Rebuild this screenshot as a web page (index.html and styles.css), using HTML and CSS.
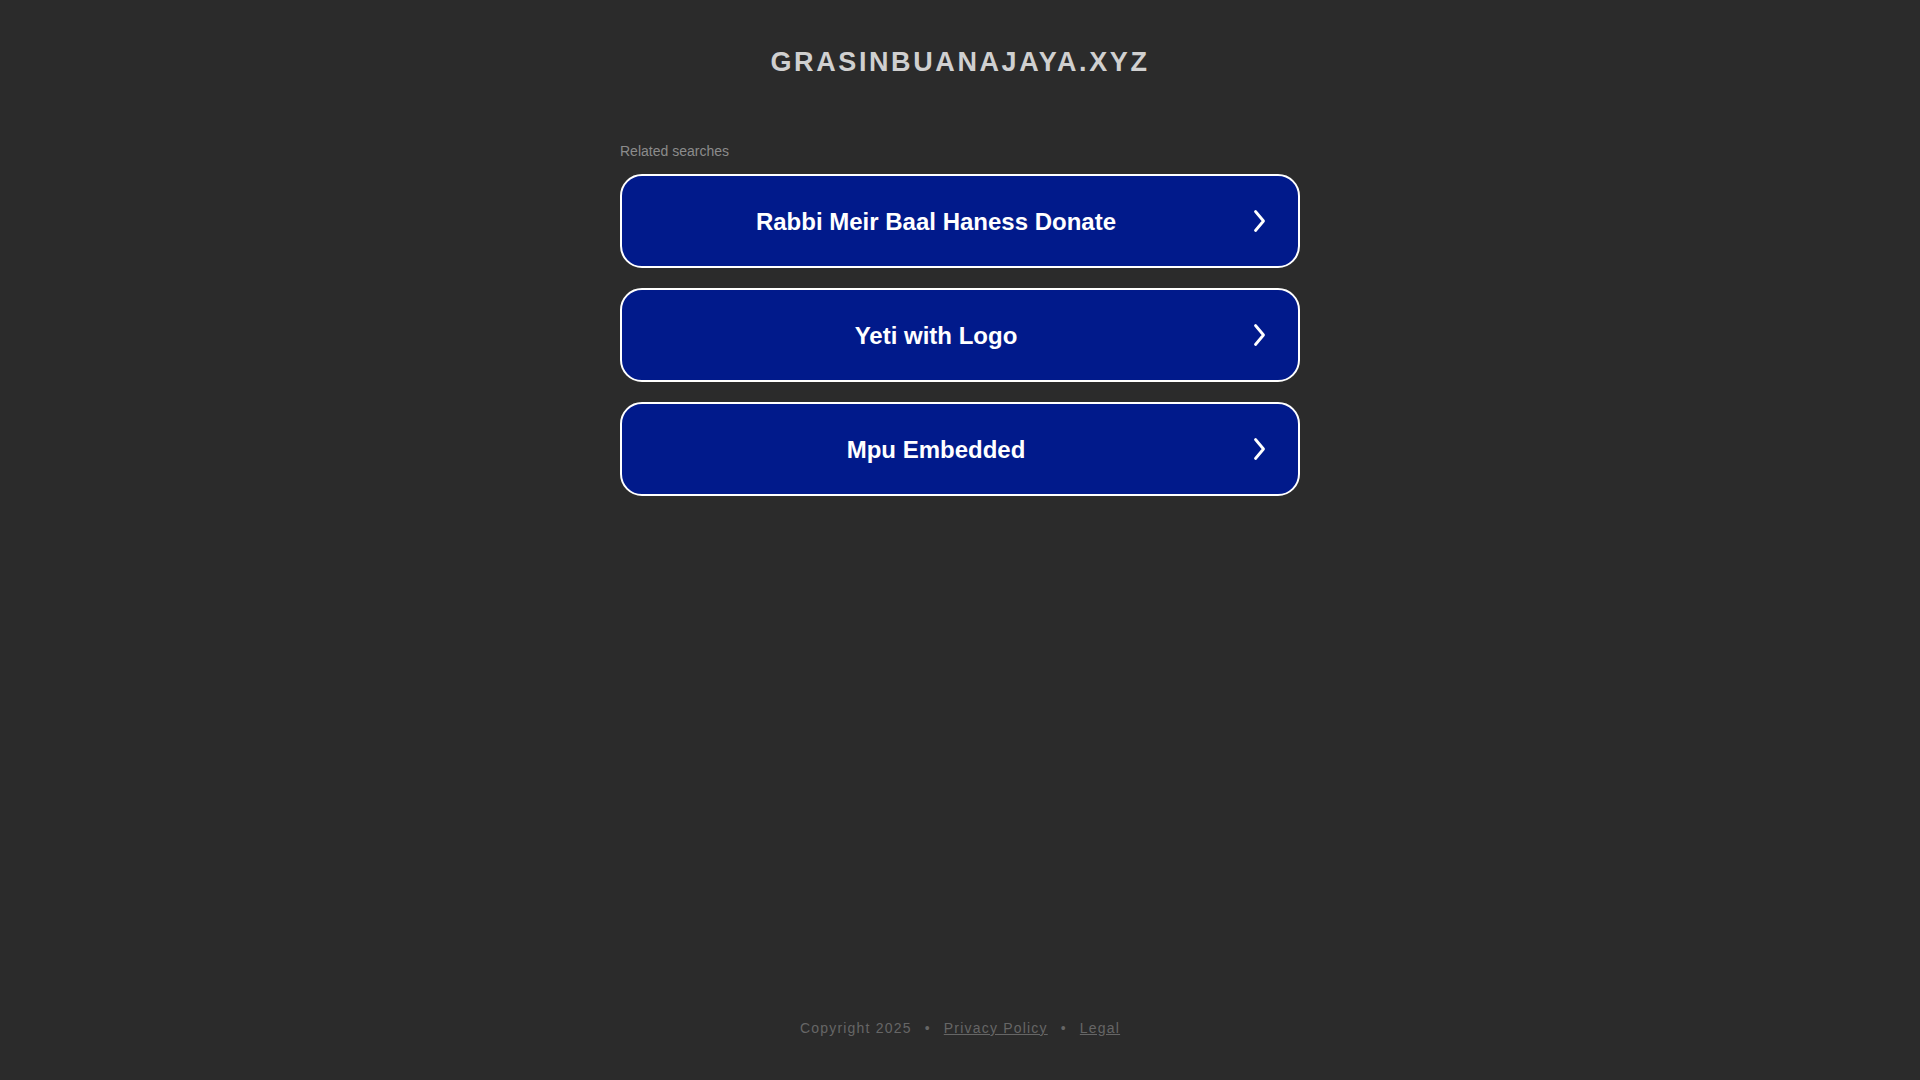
FILE: index.html
```html
<!DOCTYPE html>
<html lang="en">
<head>
<meta charset="utf-8">
<title>grasinbuanajaya.xyz</title>
<link rel="stylesheet" href="styles.css">
</head>
<body>
<div class="page">
  <header class="header">
    <h1 class="domain">grasinbuanajaya.xyz</h1>
  </header>
  <main class="content">
    <div class="related-title">Related searches</div>
    <ul class="links">
      <li><a class="link-btn" href="#"><span class="link-text">Rabbi Meir Baal Haness Donate</span><svg class="chev" width="14" height="24" viewBox="0 0 14 24"><path d="M3.5 2.5 L11.5 12 L3.5 21.5" fill="none" stroke="#fff" stroke-width="2.8" stroke-linecap="round" stroke-linejoin="round"/></svg></a></li>
      <li><a class="link-btn" href="#"><span class="link-text">Yeti with Logo</span><svg class="chev" width="14" height="24" viewBox="0 0 14 24"><path d="M3.5 2.5 L11.5 12 L3.5 21.5" fill="none" stroke="#fff" stroke-width="2.8" stroke-linecap="round" stroke-linejoin="round"/></svg></a></li>
      <li><a class="link-btn" href="#"><span class="link-text">Mpu Embedded</span><svg class="chev" width="14" height="24" viewBox="0 0 14 24"><path d="M3.5 2.5 L11.5 12 L3.5 21.5" fill="none" stroke="#fff" stroke-width="2.8" stroke-linecap="round" stroke-linejoin="round"/></svg></a></li>
    </ul>
  </main>
  <footer class="footer">
    <span>Copyright 2025</span><span class="dot">•</span><a href="#">Privacy Policy</a><span class="dot">•</span><a href="#">Legal</a>
  </footer>
</div>
</body>
</html>
```
FILE: styles.css
```css
html, body {
  margin: 0;
  padding: 0;
}
body {
  background: #2b2b2b;
  font-family: "Liberation Sans", Arial, sans-serif;
}
.page {
  min-height: 100vh;
  display: flex;
  flex-direction: column;
  align-items: center;
}
.header {
  padding-top: 47px;
}
.domain {
  margin: 0;
  font-size: 27px;
  line-height: 30px;
  font-weight: bold;
  letter-spacing: 2.6px;
  text-transform: uppercase;
  color: #d0d0d0;
  text-align: center;
}
.content {
  width: 680px;
  margin-top: 66px;
}
.related-title {
  font-size: 14px;
  line-height: 16px;
  color: #8c8c8c;
  margin-bottom: 15px;
}
.links {
  list-style: none;
  margin: 0;
  padding: 0;
  display: flex;
  flex-direction: column;
  gap: 20px;
}
.link-btn {
  box-sizing: border-box;
  height: 94px;
  display: flex;
  align-items: center;
  padding: 0 32px 0 20px;
  background: #011a8b;
  border: 2px solid #ffffff;
  border-radius: 22px;
  text-decoration: none;
  color: #ffffff;
}
.link-text {
  flex: 1;
  text-align: center;
  font-size: 24px;
  font-weight: bold;
  padding-top: 2px;
}
.chev {
  margin-left: 22px;
  flex: none;
}
.footer {
  margin-top: auto;
  padding-bottom: 44px;
  font-size: 14px;
  line-height: 16px;
  letter-spacing: 1.2px;
  color: #666666;
  display: flex;
  align-items: center;
}
.footer a {
  color: #666666;
}
.dot {
  margin: 0 13px;
}
```
